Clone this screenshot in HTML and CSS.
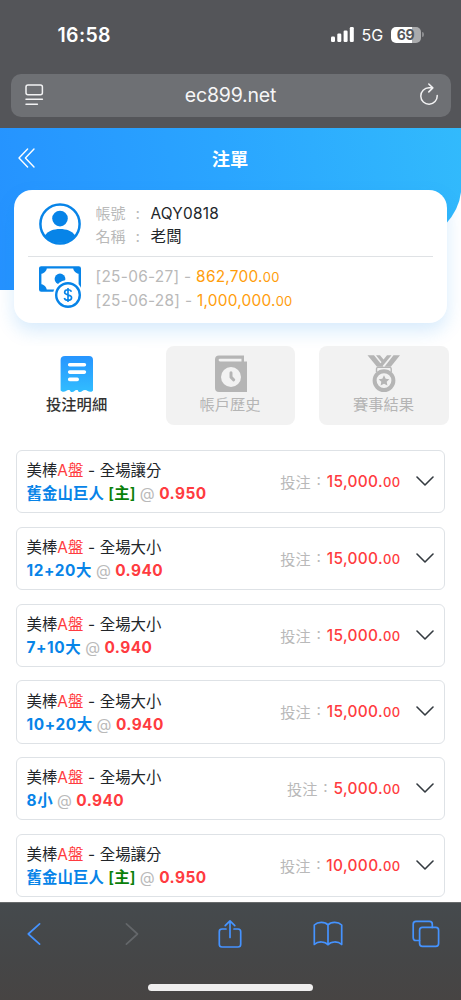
FILE: index.html
```
<!DOCTYPE html>
<html lang="zh-Hant">
<head>
<meta charset="utf-8">
<meta name="viewport" content="width=device-width, initial-scale=1">
<title>注單</title>
<link rel="stylesheet" href="styles.css">
</head>
<body>
<div class="phone">
  <header class="browser-top">
    <div class="status">
      <span class="clock">16:58</span>
      <div class="status-right">
        <svg class="signal" width="24" height="16" viewBox="0 0 24 16" fill="#fff"><rect x="0" y="9.5" width="4" height="5.5" rx="1.2"/><rect x="6.3" y="6.5" width="4" height="8.5" rx="1.2"/><rect x="12.6" y="3.5" width="4" height="11.5" rx="1.2"/><rect x="18.8" y="0" width="4" height="15" rx="1.2"/></svg>
        <span class="net">5G</span>
        <span class="battery">69</span><span class="battery-tip"></span>
      </div>
    </div>
    <div class="address">
      <svg width="19" height="22" viewBox="0 0 19 22" fill="none" stroke="#f2f2f3" stroke-width="1.5" stroke-linecap="round"><rect x="1" y="1" width="16.4" height="9.8" rx="2"/><path d="M1 15.3H17.4M1 20.3H12.4"/></svg>
      <span class="url">ec899.net</span>
      <svg class="reload" width="20" height="22" viewBox="0 0 20 22" fill="none" stroke="#f2f2f3" stroke-width="1.5" stroke-linecap="round" stroke-linejoin="round"><path d="M18.2 12.6A8.2 8.2 0 1 1 10 4.8H13.7M9.8 1L13.8 4.9L9.8 8.9"/></svg>
    </div>
  </header>

  <main class="page">
    <div class="hero"></div>
    <div class="content">
      <div class="titlebar">
        <svg class="back" width="18" height="20" viewBox="0 0 18 20" fill="none" stroke="#fff" stroke-width="1.4" stroke-linecap="round" stroke-linejoin="round"><path d="M9.6 1L1 10L9.6 19M16 1L7.4 10L16 19"/></svg>
        <h1>注單</h1>
      </div>

      <section class="card">
        <div class="card-row">
          <svg class="card-icon" width="42" height="42" viewBox="0 0 42 42"><circle cx="21" cy="21" r="19.6" fill="#fff" stroke="#0784e8" stroke-width="2.5"/><circle cx="21" cy="15.6" r="7.8" fill="#0784e8"/><path d="M5.8 32.5C9 28 14.5 26 21 26S33 28 36.2 32.5A19.4 19.4 0 0 1 5.8 32.5Z" fill="#0784e8"/></svg>
          <div class="lines">
            <div><span class="label">帳號</span><span class="colon">:</span><span class="value">AQY0818</span></div>
            <div><span class="label">名稱</span><span class="colon">:</span><span class="value">老闆</span></div>
          </div>
        </div>
        <div class="card-row money">
          <svg class="card-icon" width="42" height="42" viewBox="0 0 42 42"><rect x="1.2" y="1.4" width="39.6" height="23.2" rx="1" fill="#fff" stroke="#0784e8" stroke-width="2.4"/><path d="M1 1H8A7 7 0 0 1 1 8ZM41 1H34A7 7 0 0 0 41 8ZM1 25H8A7 7 0 0 0 1 18Z" fill="#0784e8"/><circle cx="21" cy="13" r="5.4" fill="#0784e8"/><circle cx="29" cy="29" r="15" fill="#fff"/><circle cx="29" cy="29" r="11.8" fill="#fff" stroke="#0784e8" stroke-width="2.4"/><path d="M32.4 25.7C32 24.3 30.7 23.7 29 23.7C27 23.7 25.6 24.7 25.6 26.3C25.6 30 32.6 27.8 32.6 31.7C32.6 33.3 31.2 34.3 29 34.3C27 34.3 25.7 33.5 25.3 32M29 22V36" fill="none" stroke="#0784e8" stroke-width="1.6"/></svg>
          <div class="lines dates">
            <div><span class="date">[25-06-27] - </span><span class="amount">862,700.<small>00</small></span></div>
            <div><span class="date">[25-06-28] - </span><span class="amount">1,000,000.<small>00</small></span></div>
          </div>
        </div>
      </section>

      <nav class="tabs">
        <div class="tab active">
          <svg width="34" height="38" viewBox="0 0 34 38"><defs><linearGradient id="receipt" x1="0" y1="0" x2="0" y2="1"><stop offset="0" stop-color="#2795ff"/><stop offset="1" stop-color="#31bdff"/></linearGradient></defs><path d="M5 1H29Q33 1 33 5V35.5L32 36.6C28.5 37.5 27.5 35 25 35C22.5 35 22 37 19.8 37C17.3 37 19 35 16.7 35C14.5 35 14.5 37 12 37C9.5 37 11 35 8.6 35C6 35 5.5 37.5 2 36.6L.6 35.5V5Q.6 1 5 1Z" fill="url(#receipt)"/><path d="M9.7 9.8H24.4M9.7 17.1H24.4M9.7 24.4H17.2" stroke="#fff" stroke-width="3.6" stroke-linecap="round"/></svg>
          <span>投注明細</span>
        </div>
        <div class="tab">
          <svg width="34" height="38" viewBox="0 0 34 38"><path d="M5 .5H30V6.5H33V37H5Q1 37 1 33V4.5Q1 .5 5 .5Z" fill="#b5b5b5"/><path d="M6 3.7H27.5V6.5H6A1.4 1.4 0 0 1 6 3.7Z" fill="#f2f2f2"/><circle cx="17" cy="22" r="10" fill="#f2f2f2"/><path d="M17 17.8V22.2L19.7 24.8" fill="none" stroke="#b5b5b5" stroke-width="3" stroke-linecap="round" stroke-linejoin="round"/></svg>
          <span>帳戶歷史</span>
        </div>
        <div class="tab">
          <svg width="34" height="38" viewBox="0 0 34 38"><path d="M.5 .3H7L16.3 11.7H10ZM9 .3H13L18 6.2L15.8 8.7ZM20 .3H24.5L15 11.7L12.8 9.3ZM26.5 .3H33L23.8 11.7H17.5Z" fill="#b5b5b5"/><path d="M9.5 17V13.8Q9.5 12.4 11 12.4H22.8Q24.2 12.4 24.2 13.8V17" fill="none" stroke="#b5b5b5" stroke-width="1.4"/><circle cx="17" cy="25.6" r="9.4" fill="#f2f2f2" stroke="#b5b5b5" stroke-width="4"/><path d="M17 20.2L18.7 23.7L22.4 24.2L19.7 26.8L20.4 30.5L17 28.7L13.6 30.5L14.3 26.8L11.6 24.2L15.3 23.7Z" fill="#b5b5b5"/></svg>
          <span>賽事結果</span>
        </div>
      </nav>

      <section class="bets">
        <article class="bet"><div class="info"><div class="market">美棒<i>A盤</i><span class="dash">-</span>全場讓分</div><div class="pick">舊金山巨人 <b class="home">[主]</b> <span class="at">@</span> <b class="odds">0.950</b></div></div><span class="stake">投注<span class="sc">:</span></span><span class="sum">15,000.<small>00</small></span><svg class="chev" width="18" height="11" viewBox="0 0 18 11"><path d="M1 1L9 9L17 1"/></svg></article>
        <article class="bet"><div class="info"><div class="market">美棒<i>A盤</i><span class="dash">-</span>全場大小</div><div class="pick"><span class="num">12+20</span>大 <span class="at">@</span> <b class="odds">0.940</b></div></div><span class="stake">投注<span class="sc">:</span></span><span class="sum">15,000.<small>00</small></span><svg class="chev" width="18" height="11" viewBox="0 0 18 11"><path d="M1 1L9 9L17 1"/></svg></article>
        <article class="bet"><div class="info"><div class="market">美棒<i>A盤</i><span class="dash">-</span>全場大小</div><div class="pick"><span class="num">7+10</span>大 <span class="at">@</span> <b class="odds">0.940</b></div></div><span class="stake">投注<span class="sc">:</span></span><span class="sum">15,000.<small>00</small></span><svg class="chev" width="18" height="11" viewBox="0 0 18 11"><path d="M1 1L9 9L17 1"/></svg></article>
        <article class="bet"><div class="info"><div class="market">美棒<i>A盤</i><span class="dash">-</span>全場大小</div><div class="pick"><span class="num">10+20</span>大 <span class="at">@</span> <b class="odds">0.940</b></div></div><span class="stake">投注<span class="sc">:</span></span><span class="sum">15,000.<small>00</small></span><svg class="chev" width="18" height="11" viewBox="0 0 18 11"><path d="M1 1L9 9L17 1"/></svg></article>
        <article class="bet"><div class="info"><div class="market">美棒<i>A盤</i><span class="dash">-</span>全場大小</div><div class="pick"><span class="num">8</span>小 <span class="at">@</span> <b class="odds">0.940</b></div></div><span class="stake">投注<span class="sc">:</span></span><span class="sum">5,000.<small>00</small></span><svg class="chev" width="18" height="11" viewBox="0 0 18 11"><path d="M1 1L9 9L17 1"/></svg></article>
        <article class="bet"><div class="info"><div class="market">美棒<i>A盤</i><span class="dash">-</span>全場讓分</div><div class="pick">舊金山巨人 <b class="home">[主]</b> <span class="at">@</span> <b class="odds">0.950</b></div></div><span class="stake">投注<span class="sc">:</span></span><span class="sum">10,000.<small>00</small></span><svg class="chev" width="18" height="11" viewBox="0 0 18 11"><path d="M1 1L9 9L17 1"/></svg></article>
      </section>
    </div>
  </main>

  <footer class="browser-bottom">
    <div class="tools">
      <svg width="14" height="28" viewBox="0 0 14 28"><path d="M12.6 3.8L1.3 14L12.6 24.2"/></svg>
      <svg class="disabled" width="14" height="28" viewBox="0 0 14 28"><path d="M1.4 3.8L12.5 14L1.4 24.2"/></svg>
      <svg width="24" height="30" viewBox="0 0 24 30"><path d="M8 10H4Q1.3 10 1.3 12.7V25.3Q1.3 28 4 28H20Q22.7 28 22.7 25.3V12.7Q22.7 10 20 10H16M12 18.5V2M7.2 6.7L12 1.8L16.8 6.7"/></svg>
      <svg width="30" height="28" viewBox="0 0 30 28"><path d="M15 5C12 1.7 5 1.5 1.3 5V24.5C5 21 12 21.2 15 24.7C18 21.2 25 21 28.7 24.5V5C25 1.5 18 1.7 15 5V24.7"/></svg>
      <svg width="28" height="28" viewBox="0 0 28 28"><path d="M7.5 20.5H4Q1.2 20.5 1.2 17.7V4.2Q1.2 1.4 4 1.4H17.5Q20.3 1.4 20.3 4.2V7.4"/><rect x="7.6" y="7.4" width="19" height="19" rx="2.8"/></svg>
    </div>
    <div class="home-bar"></div>
  </footer>
</div>
</body>
</html>
```
FILE: styles.css
```
* { box-sizing: border-box; }
body {
  margin: 0;
  font-family: Inter, "Noto Sans CJK TC", sans-serif;
  font-size: 15.4px;
  color: #212529;
  background: #fff;
}
svg { display: block; flex: none; }
.phone { width: 461px; height: 1000px; display: flex; flex-direction: column; overflow: hidden; }

.browser-top { height: 128px; flex: none; background: #545559; color: #fff; }
.status { height: 74px; display: flex; justify-content: space-between; padding: 22.5px 37.5px 0 57.5px; }
.clock { font-size: 19.5px; font-weight: 600; line-height: 24px; letter-spacing: .35px; }
.status-right { display: flex; align-items: center; height: 24px; }
.net { font-size: 16px; line-height: 24px; margin: 0 6px 0 6.5px; width: 23px; }
.battery {
  width: 30px; height: 16px; border-radius: 5px; text-align: center;
  font-size: 14px; line-height: 16px; font-weight: 700; letter-spacing: -.3px; color: #545559;
  background: linear-gradient(90deg, #fff 69%, #aaabad 69%);
}
.battery-tip { width: 2px; height: 5px; margin-left: 1px; border-radius: 0 2px 2px 0; background: #8c8d90; }
.address {
  margin: 0 10.5px; height: 42.5px; border-radius: 10px; padding: 0 11px 0 14px;
  background: #6e7074; display: flex; align-items: center; justify-content: space-between;
}
.reload { margin-top: -2px; }
.url { font-size: 19.5px; line-height: 43px; color: #f6f6f7; letter-spacing: -.2px; margin-right: 2px; }

.page { flex: 1; min-height: 0; display: grid; overflow: hidden; }
.hero, .content { grid-area: 1 / 1; min-width: 0; }
.content { z-index: 1; }
.hero {
  height: 162px;
  background: linear-gradient(80deg, #2592ff 0%, #2aa5ff 50%, #32bafc 100%);
  clip-path: path("M0 0H461V64Q459 82 445 97Q390 140 250 160L150 162H0Z");
}
.titlebar { height: 62px; display: grid; grid-template-columns: 36px 1fr 36px; align-items: center; padding: 0 18px; }
.back { margin-top: -2px; }
h1 { margin: 0 1px 0 0; text-align: center; color: #fff; font-size: 18.3px; line-height: 26px; font-weight: 700; }

.card {
  margin: 0 14px; height: 132.5px; padding: 10px 14px 0; border-radius: 18px; background: #fff;
  box-shadow: 0 8px 18px rgba(20, 135, 240, .17);
}
.card-row { display: flex; height: 56.5px; padding: 3px 0 0 11px; border-bottom: 1px solid #dfe2e5; }
.card-row.money { border: 0; padding-top: 9px; }
.lines { margin: -1.5px 0 0 14.5px; line-height: 23.5px; white-space: nowrap; }
.dates { margin-top: -.5px; }
.lines > div { height: 23.5px; display: flex; }
.label { color: #b9b9b9; width: 40px; font-size: 15px; }
.colon { color: #b9b9b9; width: 15px; }
.value { letter-spacing: .25px; }
.date { color: #b9b9b9; white-space: pre; letter-spacing: .3px; }
.amount { color: #ff9d0b; letter-spacing: .25px; }
small { font-size: 13px; }

.tabs { display: grid; grid-template-columns: repeat(3, 129.2px); gap: 24.3px; margin: 23.5px 0 0 12.5px; }
.tab {
  height: 79px; padding-top: 9px; border-radius: 8px; background: #f2f2f2; color: #b5b5b5;
  display: flex; flex-direction: column; align-items: center;
}
.tab span { line-height: 24px; font-size: 15.3px; margin-right: 1px; }
.tab.active { background: #fff; color: #333; font-weight: 500; }

.bets { margin: 25px 16px 0; display: grid; gap: 13.6px; }
.bet {
  height: 63.2px; border: 1px solid #dee2e6; border-radius: 6px;
  padding: 0 10.5px 0 9.5px; display: flex; align-items: center; white-space: nowrap;
}
.info { flex: 1; line-height: 23.5px; padding-top: 1.5px; }
.info > div { height: 23.2px; }
.market { font-weight: 400; }
.market i { font-style: normal; color: #ff3b40; }
.dash { display: inline-block; width: 16.5px; text-align: center; }
.pick { font-weight: 700; color: #0784e8; letter-spacing: .1px; word-spacing: .6px; }
.pick .num { letter-spacing: .6px; }
.pick b { font-weight: 700; }
.pick .home { color: #098009; font-weight: 600; }
.pick .at { font-weight: 400; color: #b9b9b9; }
.pick .odds { letter-spacing: .45px; }
.odds, .sum { color: #ff3b40; }
.stake { color: #b9b9b9; display: flex; font-size: 15.2px; margin-top: -1px; }
.sc { width: 16px; text-align: center; }
.sum { font-weight: 500; margin-right: 15px; letter-spacing: .35px; }
.chev path { fill: none; stroke: #343a40; stroke-width: 1.6; stroke-linecap: round; stroke-linejoin: round; }

.browser-bottom {
  height: 98px; flex: none; border-top: 1px solid #686b6c;
  background: linear-gradient(180deg, #454a4d 0%, #454647 60%, #474443 100%);
}
.tools {
  height: 62px; margin-left: -15px; display: grid; grid-template-columns: repeat(5, 98px);
  align-items: center; justify-items: center;
}
.tools svg { fill: none; stroke: #4593ff; stroke-width: 1.7; stroke-linecap: round; stroke-linejoin: round; }
.tools svg.disabled { stroke: #64676a; }
.home-bar { width: 164.5px; height: 6.5px; margin: 19px auto 0; border-radius: 4px; background: #efeeee; }
```
